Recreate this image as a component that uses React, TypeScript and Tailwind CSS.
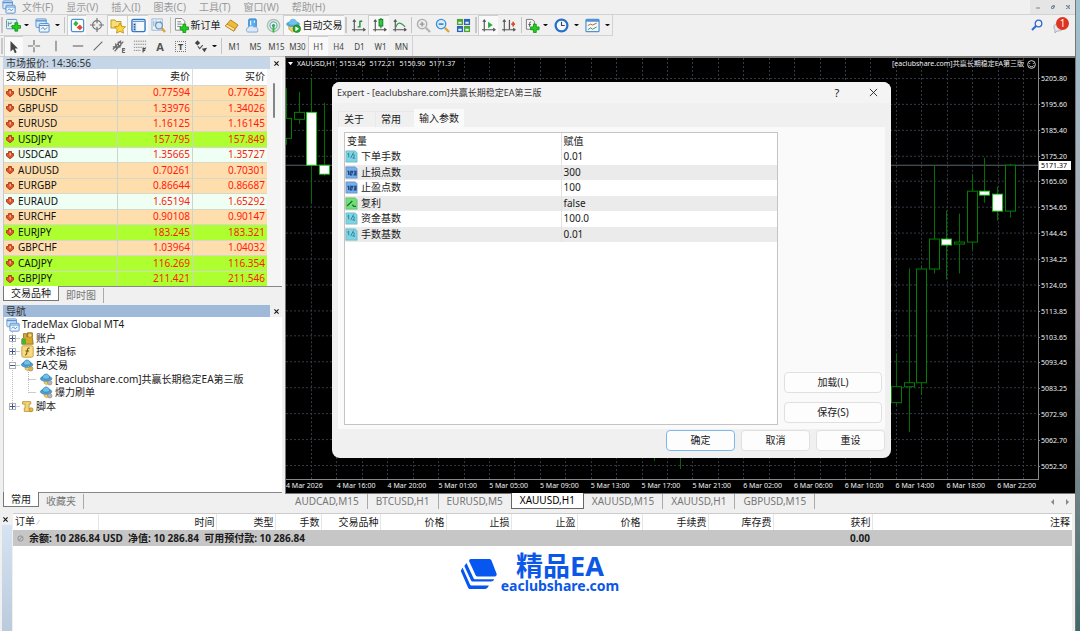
import { useState } from "react";
import type { ReactNode } from "react";
import clsx from "clsx";

const menus = ["文件(F)", "显示(V)", "插入(I)", "图表(C)", "工具(T)", "窗口(W)", "帮助(H)"];
const timeframes = ["M1", "M5", "M15", "M30", "H1", "H4", "D1", "W1", "MN"];

const quotes = [
  { symbol: "USDCHF", bid: "0.77594", ask: "0.77625", color: "bg-[#ffdead]" },
  { symbol: "GBPUSD", bid: "1.33976", ask: "1.34026", color: "bg-[#ffdead]" },
  { symbol: "EURUSD", bid: "1.16125", ask: "1.16145", color: "bg-[#ffdead]" },
  { symbol: "USDJPY", bid: "157.795", ask: "157.849", color: "bg-[#adff2f]" },
  { symbol: "USDCAD", bid: "1.35665", ask: "1.35727", color: "bg-[#f0fff4]" },
  { symbol: "AUDUSD", bid: "0.70261", ask: "0.70301", color: "bg-[#ffdead]" },
  { symbol: "EURGBP", bid: "0.86644", ask: "0.86687", color: "bg-[#ffdead]" },
  { symbol: "EURAUD", bid: "1.65194", ask: "1.65292", color: "bg-[#f0fff4]" },
  { symbol: "EURCHF", bid: "0.90108", ask: "0.90147", color: "bg-[#ffdead]" },
  { symbol: "EURJPY", bid: "183.245", ask: "183.321", color: "bg-[#adff2f]" },
  { symbol: "GBPCHF", bid: "1.03964", ask: "1.04032", color: "bg-[#ffdead]" },
  { symbol: "CADJPY", bid: "116.269", ask: "116.354", color: "bg-[#adff2f]" },
  { symbol: "GBPJPY", bid: "211.421", ask: "211.546", color: "bg-[#adff2f]" },
];

const ohlc = ["XAUUSD,H1", "5153.45", "5172.21", "5150.90", "5171.37"];

const prices = [
  "5205.80", "5195.60", "5185.40", "5175.20", "5165.00", "5154.65", "5144.45", "5134.25",
  "5124.05", "5113.85", "5103.65", "5093.45", "5083.25", "5072.90", "5062.70", "5052.50",
];

const times = [
  "4 Mar 2026", "4 Mar 16:00", "4 Mar 20:00", "5 Mar 01:00", "5 Mar 05:00",
  "5 Mar 09:00", "5 Mar 13:00", "5 Mar 17:00", "5 Mar 21:00", "6 Mar 02:00",
  "6 Mar 06:00", "6 Mar 10:00", "6 Mar 14:00", "6 Mar 18:00", "6 Mar 22:00",
];

// x, wick top, wick bottom, body top, body bottom, bearish
const candles: [number, number, number, number, number, boolean][] = [
  [1, 30, 87, 61, 81, false],
  [14, 34, 66, 55, 62, false],
  [26, 20, 146, 55, 108, true],
  [39, 45, 118, 108, 117, true],
  [369, 390, 404, 390, 401, false],
  [395, 380, 412, 380, 390, false],
  [611, 296, 348, 330, 346, false],
  [624, 211, 375, 326, 330, false],
  [636, 208, 337, 212, 326, false],
  [649, 108, 216, 182, 212, false],
  [661, 153, 222, 182, 188, true],
  [674, 156, 216, 185, 187, false],
  [687, 117, 192, 134, 185, false],
  [699, 100, 145, 134, 138, true],
  [712, 129, 163, 137, 154, true],
  [725, 106, 160, 108, 154, false],
];

const chartTabs = [
  "AUDCAD,M15", "BTCUSD,H1", "EURUSD,M5", "XAUUSD,H1", "XAUUSD,M15", "XAUUSD,H1", "GBPUSD,M15",
];

const inputs: { name: string; value: string; type: "double" | "int" | "bool" }[] = [
  { name: "下单手数", value: "0.01", type: "double" },
  { name: "止损点数", value: "300", type: "int" },
  { name: "止盈点数", value: "100", type: "int" },
  { name: "复利", value: "false", type: "bool" },
  { name: "资金基数", value: "100.0", type: "double" },
  { name: "手数基数", value: "0.01", type: "double" },
];

function Svg({ children, className = "size-[15px]" }: { children: ReactNode; className?: string }) {
  return (
    <svg viewBox="0 0 16 16" className={clsx("shrink-0", className)} fill="none" aria-hidden="true">
      {children}
    </svg>
  );
}

const Plus = ({ x = 0, y = 0 }) => (
  <path
    d={`M${x + 3} ${y}h3v3h3v3h-3v3h-3v-3h-3v-3h3z`}
    fill="#1fd01f"
    stroke="#0a8a0a"
    strokeWidth=".8"
  />
);

const Axes = () => (
  <path d="M3.500 2v12.500M1 12.500h14M2 4l1.500-2 1.500 2M13 11l2 1.500-2 1.500" stroke="#555" strokeWidth="1.200" />
);

const NewChartIcon = () => (
  <Svg>
    <rect x=".5" y="1.500" width="11" height="10" rx="1" fill="#e8f2fa" stroke="#5d93bd" />
    <path d="M2.500 4v5M2.500 6h3v-2M5 9h3" stroke="#5a9a6a" />
    <Plus x={6.5} y={5} />
  </Svg>
);

const ProfilesIcon = ({ className }: { className?: string }) => (
  <Svg className={className}>
    <rect x="1" y="1" width="11" height="9" rx="1" fill="#d8eafa" stroke="#5b93cf" />
    <path d="M1 3h11" stroke="#5b93cf" strokeWidth="1.500" />
    <rect x="4.500" y="6" width="10.500" height="9" rx="1" fill="#eef6fd" stroke="#4a86c8" />
    <path d="M4.500 8h10.500M6.500 12l2-2 2 2.500 2.500-2.500" stroke="#4a86c8" />
  </Svg>
);

const MarketWatchIcon = () => (
  <Svg>
    <rect x="1.500" y="1.500" width="13" height="13" rx="1.500" fill="#fff" stroke="#4a92d6" strokeWidth="1.300" />
    <path d="M6 3 9 5.500 6.500 9 3.500 6.500z" fill="#2fb54a" />
    <path d="m10.500 7 3 3-3 3-3.500-3z" fill="#e5472c" />
  </Svg>
);

const CrosshairIcon = () => (
  <Svg className="size-3.5">
    <circle cx="8" cy="8" r="5" stroke="#777" strokeWidth="1.400" />
    <path d="M8 0v6M8 10v6M0 8h6M10 8h6" stroke="#777" strokeWidth="1.400" />
  </Svg>
);

const FavoritesIcon = () => (
  <Svg className="size-4">
    <path d="M1 2h4l1 1.500h5V10H1z" fill="#f7dd7a" stroke="#c79a22" />
    <path d="m10 5 1.700 3.300 3.800.5-2.700 2.600.7 3.700L10 13.400l-3.500 1.700.7-3.700-2.700-2.600 3.800-.5z" fill="#fbd53c" stroke="#b98a12" strokeWidth=".8" />
  </Svg>
);

const DataWindowIcon = () => (
  <Svg>
    <rect x="1" y="1.500" width="14" height="13" rx="1.500" fill="#f4f9ff" stroke="#3277c4" strokeWidth="1.500" />
    <path d="M2 3.500h12" stroke="#3277c4" />
    <path d="M4 5v9" stroke="#9cc4ee" strokeWidth="3" />
    <path d="M3 7h1.500M3 9.500h1.500M3 12h1.500" stroke="#2a2a2a" />
  </Svg>
);

const TesterIcon = () => (
  <Svg>
    <rect x="1" y="1" width="11" height="12" fill="#eef5fb" stroke="#9ab6d0" />
    <path d="M3 3v6M5.500 2.500v5M10 3v3" stroke="#7aa4cc" />
    <circle cx="8.500" cy="8" r="3.600" fill="#cfe6f8" fillOpacity=".8" stroke="#6e93b5" strokeWidth="1.200" />
    <path d="m11.500 11 3.500 4" stroke="#d9a23a" strokeWidth="2.400" />
  </Svg>
);

const NewOrderIcon = () => (
  <Svg>
    <path d="M1.500.5h7l3 3V13h-10z" fill="#fafafa" stroke="#8a8a8a" />
    <path d="M3.500 4h4M3.500 6.500h5M3.500 9h4" stroke="#777" />
    <Plus x={6.5} y={6.5} />
  </Svg>
);

const MetaEditorIcon = () => (
  <Svg>
    <path d="M1.500 8.500 7 2l8 5.500-4.500 6.500z" fill="#eebc3c" stroke="#b97e14" />
    <path d="m1.500 8.500 9 5.500 1-3L3 6.500z" fill="#fbe29a" stroke="#b97e14" strokeWidth=".8" />
  </Svg>
);

const HostingIcon = () => (
  <Svg>
    <rect x="4" y="1" width="8" height="9" rx="1" fill="#58aef0" stroke="#2f78c0" />
    <path d="M6 3v5M10 3v2" stroke="#eaf6ff" strokeWidth="1.300" />
    <path d="M3 15a2.500 2.500 0 0 1 .5-4.800 3.500 3.500 0 0 1 6-.5 2.800 2.800 0 0 1 4 2.600A2 2 0 0 1 13 15z" fill="#dce9f8" stroke="#86a6cc" />
  </Svg>
);

const SignalsIcon = () => (
  <Svg>
    <circle cx="8" cy="8" r="6.500" stroke="#a9c4b0" strokeWidth="1.600" />
    <circle cx="8" cy="8" r="3.800" stroke="#7bafc4" strokeWidth="1.400" />
    <circle cx="8" cy="8" r="1.700" fill="#2ea84e" />
    <path d="M8 9v6.500" stroke="#3bb54a" strokeWidth="2" />
  </Svg>
);

const ExpertIcon = ({ className, dot = "#e3b43c" }: { className?: string; dot?: string }) => (
  <Svg className={className}>
    <path d="M5 9h6v3.500l-3 2-3-2z" fill="#f3cf63" stroke="#b98f2a" strokeWidth=".7" />
    <ellipse cx="7.500" cy="7" rx="7" ry="3.200" fill="#4fa6d8" stroke="#2d76a8" strokeWidth=".8" />
    <path d="M3 6.500c0-7 9-7 9 0-2 1.500-7 1.500-9 0z" fill="#71c0ea" stroke="#2d76a8" strokeWidth=".8" />
    <circle cx="12" cy="12" r="2.800" fill={dot} stroke="#777" strokeWidth=".6" />
  </Svg>
);

const AutoTradingIcon = () => (
  <Svg>
    <path d="M3 8h8v5l-4 2-4-3z" fill="#f3cf63" stroke="#b98f2a" strokeWidth=".7" />
    <ellipse cx="7.500" cy="6.500" rx="7.300" ry="3.200" fill="#4fa6d8" />
    <path d="M3 6c0-7 9-7 9 0-2 1.500-7 1.500-9 0z" fill="#71c0ea" />
    <circle cx="11.500" cy="11.500" r="4" fill="#22a82e" stroke="#137a1c" strokeWidth=".7" />
    <path d="m10 9 4 2.500-4 2.500z" fill="#fff" />
  </Svg>
);

const BarChartIcon = () => (
  <Svg>
    <Axes />
    <path d="M9.500 3v7M7 9.500h2.500M9.500 3.500H12" stroke="#1d8f35" strokeWidth="1.500" />
  </Svg>
);

const CandleChartIcon = () => (
  <Svg>
    <Axes />
    <path d="M9.500 0v11" stroke="#0d7d22" strokeWidth="1.200" />
    <rect x="7.500" y="1.500" width="4" height="7" fill="#2ecc45" stroke="#0d7d22" />
  </Svg>
);

const LineChartIcon = () => (
  <Svg>
    <Axes />
    <path d="M4 10c2-6 5-6 10-.5" stroke="#3b9a4f" strokeWidth="1.300" />
  </Svg>
);

const ZoomIcon = ({ out }: { out?: boolean }) => (
  <Svg>
    <circle cx="6.500" cy="6.500" r="5" fill={out ? "#d6ebfb" : "#ececec"} stroke={out ? "#3e8fd6" : "#aaa"} strokeWidth="1.400" />
    <path d={out ? "M4 6.500h5" : "M4 6.500h5M6.500 4v5"} stroke={out ? "#2270bd" : "#999"} strokeWidth="1.500" />
    <path d="m10.500 10.500 4.500 4.500" stroke={out ? "#dba535" : "#b5b5b5"} strokeWidth="2.400" />
  </Svg>
);

const TileIcon = () => (
  <Svg>
    <rect x="1" y="1" width="6.500" height="6.500" fill="#4aa52e" />
    <rect x="8.500" y="1" width="6.500" height="6.500" fill="#2c62b8" />
    <rect x="1" y="8.500" width="6.500" height="6.500" fill="#2c62b8" />
    <rect x="8.500" y="8.500" width="6.500" height="6.500" fill="#4aa52e" />
    <path d="M2.500 5H6M10 5h3.500M2.500 12.500H6M10 12.500h3.500" stroke="#e6f4fa" strokeWidth="2" />
  </Svg>
);

const AutoScrollIcon = () => (
  <Svg>
    <Axes />
    <path d="m7.500 4 5 3.500-5 3.500z" fill="#27b03c" />
  </Svg>
);

const ShiftIcon = () => (
  <Svg>
    <Axes />
    <path d="M9 2v10" stroke="#555" strokeWidth="1.300" />
    <path d="M15 6.500h-4M13 4v5" stroke="#d4502c" strokeWidth="1.800" />
  </Svg>
);

const IndicatorsIcon = () => (
  <Svg>
    <path d="M1.500 1.500h6l2.500 2V12H1.500z" fill="#f6f6f6" stroke="#777" />
    <path d="M6.500 4.500c-2-1-1.500 1-1.500 5M3.500 7h3" stroke="#555" />
    <Plus x={6} y={6.5} />
  </Svg>
);

const ClockIcon = () => (
  <Svg>
    <circle cx="8" cy="8" r="6.300" fill="#f2f8ff" stroke="#2a6fc4" strokeWidth="2.400" />
    <path d="M8 4v4h3.500" stroke="#444" strokeWidth="1.200" />
  </Svg>
);

const TemplateIcon = () => (
  <Svg>
    <rect x="1" y="1.500" width="14" height="13" rx="1" fill="#f3f8fc" stroke="#5292cf" strokeWidth="1.300" />
    <path d="M1 3h14" stroke="#5292cf" strokeWidth="2" />
    <path d="m3 8 3-1.500 2 1 4.500-2" stroke="#c2593a" />
    <path d="m3 12.500 3-2 2 1.500 4.500-2.500" stroke="#3d9148" />
  </Svg>
);

const CursorIcon = () => (
  <Svg className="size-3.5">
    <path d="M4 1v12l3-2.500 2 4.500 2-1-2-4.200h3.500z" fill="#444" />
  </Svg>
);

const StrokeIcon = ({ d }: { d: string }) => (
  <Svg className="size-3.5">
    <path d={d} stroke="#6a6a6a" strokeWidth="1.300" />
  </Svg>
);

const FiboIcon = () => (
  <Svg className="size-3.5">
    <path d="M1 2.500h14M1 6h14M1 9.500h14M1 13h8" stroke="#777" strokeDasharray="1.500 1" />
    <path d="M11.500 15.500V11h3M11.500 13H14" stroke="#444" strokeWidth="1.200" />
  </Svg>
);

const ArrowsIcon = () => (
  <Svg className="size-3.5">
    <path d="m1 4.500 3-3 3 3-3 3z" fill="#444" />
    <path d="m4.500 8.500 2 2.500 3.500-4" stroke="#555" strokeWidth="1.400" />
    <path d="m9 11 6-1-3 5z" fill="#444" />
  </Svg>
);

const TypeIcon = ({ type }: { type: "double" | "int" | "bool" }) => {
  const fill = { double: "#7fd3e2", int: "#78aeea", bool: "#72dd7a" }[type];
  const ink = { double: "#1e7486", int: "#173f78", bool: "#187426" }[type];
  return (
    <Svg className="size-[13px]">
      <path d="M1 1h11.500L15 3.500V15H1z" fill={fill} stroke={ink} strokeOpacity=".35" />
      {type === "double" && <path d="m3 5 1.500-1v5M10.500 3 7 10M9.500 6c2.500-1 3 1 0 4h3" stroke={ink} />}
      {type === "int" && <path d="M3 6.500h1.500V11M6 6.500h3v2H6.500V11H9M10.500 6.500h3V11h-3M11 8.700h2.500" stroke={ink} strokeWidth="1.400" />}
      {type === "bool" && <path d="M2.500 11 9 5M9 9.500l2 2h2.500" stroke={ink} strokeWidth="1.600" />}
    </Svg>
  );
};

function Grip() {
  return <span className="mx-px h-4 w-0.5 shrink-0 border-x border-[#c8c8c8]" />;
}

function Divider() {
  return <span className="mx-0.5 h-4 w-px shrink-0 bg-[#c4c4c4]" />;
}

function ToolButton({
  label,
  width,
  active,
  children,
}: {
  label: string;
  width: string;
  active?: boolean;
  children: ReactNode;
}) {
  return (
    <button
      aria-label={label}
      className={clsx(
        "flex h-5 shrink-0 items-center justify-center gap-0.5 whitespace-nowrap",
        width,
        active && "border-l border-t border-[#cfcfcf] bg-[#f9f9f9]",
      )}
    >
      {children}
    </button>
  );
}

function DropArrow({ label }: { label: string }) {
  return (
    <button aria-label={label} className="flex h-5 w-[9px] shrink-0 items-center justify-center">
      <svg viewBox="0 0 6 3" className="w-[5px]" aria-hidden="true">
        <path d="M0 0h6L3 3z" fill="#111" />
      </svg>
    </button>
  );
}

function Toolbar() {
  const [frame, setFrame] = useState("H1");

  return (
    <div className="relative shrink-0 border-t border-[#d2d2d2]">
      <div className="flex h-[21px] w-fit items-center border-b border-r border-[#d2d2d2]">
        <Grip />
        <ToolButton label="新图表" width="w-[18px]"><NewChartIcon /></ToolButton>
        <DropArrow label="新图表选项" />
        <ToolButton label="配置文件" width="w-[22px]"><ProfilesIcon /></ToolButton>
        <DropArrow label="配置文件选项" />
        <Divider />
        <ToolButton label="市场报价" width="w-[19px]" active><MarketWatchIcon /></ToolButton>
        <ToolButton label="数据窗口" width="w-[21px]"><CrosshairIcon /></ToolButton>
        <ToolButton label="导航" width="w-5" active><FavoritesIcon /></ToolButton>
        <ToolButton label="终端" width="w-[21px]" active><DataWindowIcon /></ToolButton>
        <ToolButton label="策略测试" width="w-5"><TesterIcon /></ToolButton>
        <Divider />
        <ToolButton label="新订单" width="w-12"><NewOrderIcon /><span>新订单</span></ToolButton>
        <ToolButton label="编辑器" width="w-[21px]"><MetaEditorIcon /></ToolButton>
        <ToolButton label="虚拟主机" width="w-[21px]"><HostingIcon /></ToolButton>
        <ToolButton label="信号" width="w-5"><SignalsIcon /></ToolButton>
        <ToolButton label="自动交易" width="w-[61px]" active><AutoTradingIcon /><span>自动交易</span></ToolButton>
        <Grip />
        <ToolButton label="柱状图" width="w-5"><BarChartIcon /></ToolButton>
        <ToolButton label="阴阳烛" width="w-[21px]" active><CandleChartIcon /></ToolButton>
        <ToolButton label="折线图" width="w-5"><LineChartIcon /></ToolButton>
        <Divider />
        <ToolButton label="放大" width="w-[18px]"><ZoomIcon /></ToolButton>
        <ToolButton label="缩小" width="w-[21px]"><ZoomIcon out /></ToolButton>
        <ToolButton label="平铺窗口" width="w-[21px]"><TileIcon /></ToolButton>
        <Grip />
        <ToolButton label="自动滚动" width="w-5" active><AutoScrollIcon /></ToolButton>
        <ToolButton label="图表平移" width="w-[21px]"><ShiftIcon /></ToolButton>
        <Divider />
        <ToolButton label="指标" width="w-[17px]"><IndicatorsIcon /></ToolButton>
        <DropArrow label="指标列表" />
        <ToolButton label="周期" width="w-[22px]"><ClockIcon /></ToolButton>
        <DropArrow label="周期列表" />
        <ToolButton label="模板" width="w-[22px]"><TemplateIcon /></ToolButton>
        <DropArrow label="模板列表" />
      </div>
      <div className="flex h-5 w-fit items-center border-r border-[#d2d2d2]">
        <Grip />
        <ToolButton label="光标" width="w-[19px]" active><CursorIcon /></ToolButton>
        <ToolButton label="十字线" width="w-[21px]"><StrokeIcon d="M8 1v6M8 9.500V15M1 8h6M9.500 8H15" /></ToolButton>
        <ToolButton label="垂直线" width="w-[23px]"><StrokeIcon d="M8 2v12" /></ToolButton>
        <ToolButton label="水平线" width="w-[21px]"><StrokeIcon d="M2 8h12" /></ToolButton>
        <ToolButton label="趋势线" width="w-5"><StrokeIcon d="M3 13 13 3" /></ToolButton>
        <ToolButton label="通道" width="w-[21px]"><StrokeIcon d="M1 12 10 2M3 14 13 3M4 5l1 6M7 3l1 7M10 2v6M1 9h9M15 11h-3v4.500h3M12 13h2.500" /></ToolButton>
        <ToolButton label="斐波纳契" width="w-[21px]"><FiboIcon /></ToolButton>
        <ToolButton label="文字" width="w-5"><span className="text-[11px] font-bold text-[#555]">A</span></ToolButton>
        <ToolButton label="文本标签" width="w-[21px]">
          <span className="flex size-[11px] items-center justify-center border border-dotted border-[#777] text-[9px] font-bold text-[#444]">T</span>
        </ToolButton>
        <ToolButton label="箭头" width="w-[19px]"><ArrowsIcon /></ToolButton>
        <DropArrow label="箭头列表" />
        <Divider />
        {timeframes.map((t) => (
          <button
            key={t}
            onClick={() => setFrame(t)}
            className={clsx(
              "h-5 shrink-0 text-[8px] text-[#444]",
              t === frame ? "w-5 border-l border-t border-[#cfcfcf] bg-[#f9f9f9]" : "w-[21px]",
            )}
          >
            {t}
          </button>
        ))}
      </div>
      <div className="absolute right-1 top-0 flex h-5 items-center gap-2">
        <button aria-label="搜索">
          <svg viewBox="0 0 12 12" className="size-3" fill="none">
            <circle cx="7.500" cy="4.500" r="3.300" stroke="#2f66d0" strokeWidth="1.300" />
            <path d="m5 7-4 4" stroke="#2f66d0" strokeWidth="2" />
          </svg>
        </button>
        <button aria-label="通知" className="relative h-4 w-5">
          <svg viewBox="0 0 20 16" className="absolute inset-0" fill="none">
            <path d="M3 9c0-3 9-3 9 1s-4 4-6 4l-2 2v-3c-1-1-1-2-1-4z" fill="#e3e6ea" stroke="#a9adb3" />
          </svg>
          <span className="absolute right-0.5 top-0 flex size-[13px] items-center justify-center rounded-full bg-[#dd3420] text-[10px] text-white">
            1
          </span>
        </button>
      </div>
    </div>
  );
}

function PanelTitle({ children, className }: { children: ReactNode; className: string }) {
  return (
    <div className="flex h-3 shrink-0 items-center">
      <h2 className={clsx("flex h-3 flex-1 items-center pl-[3px]", className)}>{children}</h2>
      <button aria-label="关闭" className="flex w-3 items-center justify-center">
        <svg viewBox="0 0 6 6" className="size-[5px]"><path d="M.5.5l5 5M5.500.5l-5 5" stroke="#111" strokeWidth="1.300" /></svg>
      </button>
    </div>
  );
}

function PanelTabs({ tabs }: { tabs: string[] }) {
  return (
    <div className="flex h-[15px] shrink-0 border-t border-[#888]">
      {tabs.map((t, i) => (
        <button
          key={t}
          className={clsx(
            "h-[15px] px-[7px]",
            i === 0 ? "-mt-px border-x border-b border-[#777] bg-white" : "my-px h-3 border-r border-[#aaa] text-[#777]",
          )}
        >
          {t}
        </button>
      ))}
    </div>
  );
}

function MarketWatch() {
  return (
    <section className="flex shrink-0 flex-col">
      <PanelTitle className="bg-[#c5d6e8] text-[#333]">市场报价: 14:36:56</PanelTitle>
      <div className="flex border-l border-[#c8c8c8] bg-white">
        <table className="h-[217px] flex-1 table-fixed border-collapse">
          <thead>
            <tr className="h-4 text-right">
              <th className="w-[113px] border-r border-[#dcdcdc] pl-0.5 text-left font-normal">交易品种</th>
              <th className="border-r border-[#dcdcdc] pr-0.5 font-normal">卖价</th>
              <th className="pr-0.5 font-normal">买价</th>
            </tr>
          </thead>
          <tbody>
            {quotes.map((q) => (
              <tr key={q.symbol} className={clsx("border-t border-[#d8d8c8] text-right text-[#ff1a10]", q.color)}>
                <td className="border-r border-[#d0d4c8] text-left text-[#111]">
                  <span className="flex items-center gap-1 pl-0.5">
                    <svg viewBox="0 0 8 8" className="size-2" aria-hidden="true">
                      <path d="M2.500.5h3v2h2v2.500L4 7.800.5 5V2.500h2z" fill="#e2552b" stroke="#9c2f12" strokeWidth=".8" />
                      <path d="M3.500 2v2.500h1.500V2z" fill="#f8b48c" />
                    </svg>
                    {q.symbol}
                  </span>
                </td>
                <td className="border-r border-[#d0d4c8] pr-0.5">{q.bid}</td>
                <td className="pr-0.5">{q.ask}</td>
              </tr>
            ))}
          </tbody>
        </table>
        <div className="mr-px w-3.5 bg-[#f5f5f5] pl-1.5 pt-3.5">
          <div className="h-[35px] w-0.5 rounded bg-[#858585]" />
        </div>
      </div>
      <PanelTabs tabs={["交易品种", "即时图"]} />
    </section>
  );
}

function TreeRow({
  toggle,
  depth = 0,
  icon,
  children,
}: {
  toggle?: "+" | "-";
  depth?: number;
  icon: ReactNode;
  children: ReactNode;
}) {
  return (
    <li className={clsx("flex items-center whitespace-nowrap", depth === 0 && "pl-0.5", depth === 1 && "pl-[5px]", depth === 2 && "pl-6")}>
      {toggle && (
        <button aria-label={toggle === "+" ? "展开" : "折叠"} className="relative mr-1 flex size-[7px] shrink-0 items-center justify-center border border-[#b0b0b0] bg-white">
          <svg viewBox="0 0 5 5" className="size-[5px]">
            <path d={toggle === "+" ? "M0 2.500h5M2.500 0v5" : "M0 2.500h5"} stroke="#3556a0" />
          </svg>
        </button>
      )}
      {depth > 0 && <span className={clsx("h-px shrink-0 bg-[#ccc]", depth === 1 ? "-ml-1 mr-px w-1" : "mr-1 w-2")} />}
      {icon}
      <span className="ml-0.5">{children}</span>
    </li>
  );
}

function Navigator() {
  return (
    <section className="flex min-h-0 flex-1 flex-col">
      <PanelTitle className="bg-[#9fb9d8] text-[#333]">导航</PanelTitle>
      <div className="min-h-0 flex-1 overflow-hidden border-l border-[#c8c8c8] bg-white pt-px">
        <ul className="relative grid h-[95px] auto-rows-fr before:absolute before:bottom-1.5 before:left-2 before:top-3.5 before:border-l before:border-dotted before:border-[#bbb] after:absolute after:bottom-5 after:left-6 after:top-12 after:border-l after:border-dotted after:border-[#bbb]">
          <TreeRow icon={<ProfilesIcon className="size-3.5" />}>TradeMax Global MT4</TreeRow>
          <TreeRow
            toggle="+"
            depth={1}
            icon={
              <Svg className="size-[13px]">
                <path d="M3 2h4v4h1V1h6v6l1 8H1V9l2-2z" fill="#dba72a" stroke="#8f6a12" />
                <circle cx="11" cy="4" r="2.500" fill="#f5d676" stroke="#8f6a12" strokeWidth=".6" />
                <path d="M1 8h5v7H1z" fill="#43b33a" />
              </Svg>
            }
          >
            账户
          </TreeRow>
          <TreeRow
            toggle="+"
            depth={1}
            icon={
              <Svg className="size-[13px]">
                <rect x="1" y="1" width="14" height="14" rx="2" fill="#f6dc80" stroke="#b9902e" />
                <path d="M10.500 4c-2-1-2.500.5-3 4s-1 4.500-2.500 4M5.500 7.500H10" stroke="#6d5210" strokeWidth="1.300" />
              </Svg>
            }
          >
            技术指标
          </TreeRow>
          <TreeRow toggle="-" depth={1} icon={<ExpertIcon className="size-[13px]" />}>EA交易</TreeRow>
          <TreeRow depth={2} icon={<ExpertIcon className="size-[13px]" dot="#b5b5b5" />}>
            [eaclubshare.com]共赢长期稳定EA第三版
          </TreeRow>
          <TreeRow depth={2} icon={<ExpertIcon className="size-[13px]" dot="#b5b5b5" />}>爆力刷单</TreeRow>
          <TreeRow
            toggle="+"
            depth={1}
            icon={
              <Svg className="size-[13px]">
                <path d="M2 2h10v3h-2v6h3v3H4v-4H5V5H2z" fill="#f4d573" stroke="#b58d2b" />
                <circle cx="12.500" cy="12" r="2.500" fill="#e6b93f" stroke="#8f6a12" strokeWidth=".6" />
              </Svg>
            }
          >
            脚本
          </TreeRow>
        </ul>
      </div>
      <PanelTabs tabs={["常用", "收藏夹"]} />
    </section>
  );
}

function Candles() {
  // plot coordinates: 752 x 422
  const columns = Array.from({ length: 29 }, (_, i) => Math.round(26 + i * 25.43));
  const rows = Array.from({ length: 16 }, (_, i) => Math.round(21 + i * 25.84));

  return (
    <svg viewBox="0 0 752 422" preserveAspectRatio="none" className="absolute inset-0 size-full" shapeRendering="crispEdges">
      <g stroke="#343c46" strokeDasharray="2 2">
        {columns.map((x) => <path key={x} d={`M${x - 0.5} 0V422`} />)}
        {rows.map((y) => <path key={y} d={`M0 ${y - 0.5}H752`} />)}
      </g>
      <path d="M0 107.500H752" stroke="#59636e" />
      {candles.map(([x, high, low, top, bottom, bearish]) => (
        <g key={x} stroke={bearish ? "#20c020" : "#008000"}>
          <path d={`M${x - 0.5} ${high}V${low}`} stroke="#007000" />
          <rect x={x - 5.5} y={top - 0.5} width="10" height={bottom - top} fill={bearish ? "#fff" : "#000"} />
        </g>
      ))}
    </svg>
  );
}

function Chart() {
  return (
    <div className="flex min-h-0 flex-1 flex-col border-l border-t-2 border-[#777] bg-black text-[7px] text-[#f0f0f0]">
      <div className="flex min-h-0 flex-1">
        <div className="relative flex-1 overflow-hidden border-b border-r border-[#888]">
          <Candles />
          <div className="relative flex items-center justify-between pl-0.5 pr-0.5 leading-3">
            <span className="flex items-center gap-1">
              <svg viewBox="0 0 6 4" className="w-[5px]"><path d="M0 0h6L3 4z" fill="#fff" /></svg>
              {ohlc.map((v) => <span key={v}>{v}</span>)}
            </span>
            <span className="flex items-center gap-[3px]">
              <span>[eaclubshare.com]共赢长期稳定EA第三版</span>
              <svg viewBox="0 0 10 10" className="size-[9px]" fill="none" stroke="#ddd">
                <circle cx="5" cy="5" r="4.300" />
                <path d="M3 3.500v1M7 3.500v1M2.500 6c1 2 4 2 5 0" />
              </svg>
            </span>
          </div>
        </div>
        <div className="relative flex w-9 flex-col justify-between pb-2 pl-0.5 pt-4">
          {prices.map((p) => (
            <span key={p} className="relative h-2.5 leading-[10px] before:absolute before:-left-0.5 before:top-1 before:h-px before:w-px before:bg-[#888]">
              {p}
            </span>
          ))}
          <span className="absolute left-0 top-[103px] h-[9px] w-8 bg-white pl-0.5 leading-[9px] text-black">5171.37</span>
        </div>
      </div>
      <div className="grid h-[13px] grid-cols-[repeat(15,minmax(0,1fr))] whitespace-nowrap pr-[27px] leading-3">
        {times.map((t) => <span key={t}>{t}</span>)}
      </div>
    </div>
  );
}

function ExpertDialog() {
  const button = "h-[21px] rounded-sm border border-[#e0e0e0] bg-[#fdfdfd]";

  return (
    <div
      role="dialog"
      aria-labelledby="expert-title"
      className="absolute left-[47px] top-[26px] flex h-[376px] w-[559px] flex-col overflow-hidden rounded-lg bg-[#f0f0f0] px-1.5 shadow-lg"
    >
      <header className="-mx-1.5 flex h-[21px] shrink-0 items-center bg-[#f4f4f4] pl-[5px] pr-3">
        <h1 id="expert-title" className="flex-1 text-[9px] text-[#333]">Expert - [eaclubshare.com]共赢长期稳定EA第三版</h1>
        <button aria-label="帮助" className="mr-6 w-3 text-[11px]">?</button>
        <button aria-label="关闭" className="flex w-3 justify-center">
          <svg viewBox="0 0 10 10" className="size-[9px]"><path d="M1 1l8 8M9 1l-8 8" stroke="#222" /></svg>
        </button>
      </header>
      <div role="tablist" className="mt-1.5 flex h-[18px] shrink-0 items-end">
        <button role="tab" className="h-4 w-[38px] border border-b-0 border-[#e8e8e8] pl-[5px] text-left">关于</button>
        <button role="tab" className="h-4 w-[38px] border-t border-[#e8e8e8] pl-[5px] text-left">常用</button>
        <button role="tab" aria-selected="true" className="h-[18px] w-[50px] bg-[#fafafa]">输入参数</button>
      </div>
      <div className="flex min-h-0 flex-1 gap-1.5 bg-[#fafafa] pb-1 pl-1.5 pr-[3px] pt-[5px]">
        <div className="flex-1 border border-[#c4c4c4] bg-white">
          <table className="h-[109px] w-full table-fixed border-collapse">
            <thead>
              <tr className="h-4 text-left">
                <th className="w-1/2 border-r border-[#e2e2e2] pl-0.5 font-normal">变量</th>
                <th className="pl-0.5 font-normal">赋值</th>
              </tr>
            </thead>
            <tbody>
              {inputs.map((p) => (
                <tr key={p.name} className="even:bg-[#ebebeb]">
                  <td className="border-r border-[#e2e2e2]">
                    <span className="flex items-center gap-[3px]">
                      <TypeIcon type={p.type} />
                      {p.name}
                    </span>
                  </td>
                  <td className="pl-0.5">{p.value}</td>
                </tr>
              ))}
            </tbody>
          </table>
        </div>
        <div className="flex w-[98px] flex-col justify-end gap-[9px] pb-0.5">
          <button className={button}>加载(L)</button>
          <button className={button}>保存(S)</button>
        </div>
      </div>
      <footer className="flex shrink-0 justify-end gap-1.5 pb-[7px] pt-px">
        <button className="h-[21px] w-[69px] rounded-sm border border-[#7db8ea] bg-[#fdfdfd]">确定</button>
        <button className={clsx(button, "w-[69px]")}>取消</button>
        <button className={clsx(button, "w-[69px]")}>重设</button>
      </footer>
    </div>
  );
}

function ChartTabs() {
  return (
    <nav className="flex h-5 shrink-0 items-start border-t border-[#777] pl-0.5 text-[#777]">
      {chartTabs.map((t, i) => (
        <button
          key={`${t}-${i}`}
          className={clsx(
            "px-2",
            i === 3 ? "-mt-px h-4 border border-t-0 border-[#666] bg-white text-black" : "h-[15px] border-r border-[#aaa]",
            i === 2 && "border-r-0",
          )}
        >
          {t}
        </button>
      ))}
      <span className="ml-auto mr-1.5 flex h-[15px] items-center gap-3">
        <button aria-label="向左"><svg viewBox="0 0 3 6" className="w-[3px]"><path d="M3 0v6L0 3z" fill="#888" /></svg></button>
        <button aria-label="向右"><svg viewBox="0 0 3 6" className="w-[3px]"><path d="M0 0v6l3-3z" fill="#888" /></svg></button>
      </span>
    </nav>
  );
}

function Terminal() {
  const cell = "border-r border-[#e6e6e6] pr-px font-normal";

  return (
    <section className="flex h-[118px] shrink-0">
      <div className="flex w-[13px] shrink-0 flex-col pl-0.5">
        <button aria-label="关闭" className="flex h-3 items-center pl-px">
          <svg viewBox="0 0 6 6" className="size-[5px]"><path d="M.5.5l5 5M5.500.5l-5 5" stroke="#111" strokeWidth="1.300" /></svg>
        </button>
        <div className="w-2.5 flex-1 bg-linear-to-b from-[#d5e3f2] to-[#bccbdc]" />
      </div>
      <div className="mr-[3px] flex-1 border-t border-[#ccc] bg-white">
        <table className="w-full table-fixed border-collapse">
          <thead>
            <tr className="h-4 text-right">
              <th className="w-[85px] border-r border-[#e6e6e6] pl-0.5 text-left font-normal">订单 <span className="text-[7px] text-[#aaa]">⁄</span></th>
              <th className={clsx(cell, "w-[118px]")}>时间</th>
              <th className={clsx(cell, "w-[59px]")}>类型</th>
              <th className={clsx(cell, "w-[46px]")}>手数</th>
              <th className={clsx(cell, "w-[59px]")}>交易品种</th>
              <th className={clsx(cell, "w-[66px]")}>价格</th>
              <th className={clsx(cell, "w-[65px]")}>止损</th>
              <th className={clsx(cell, "w-[66px]")}>止盈</th>
              <th className={clsx(cell, "w-[65px]")}>价格</th>
              <th className={clsx(cell, "w-[66px]")}>手续费</th>
              <th className={clsx(cell, "w-[65px]")}>库存费</th>
              <th className={clsx(cell, "w-[99px]")}>获利</th>
              <th className="pr-0.5 font-normal">注释</th>
            </tr>
          </thead>
          <tbody>
            <tr className="h-4 bg-[#c6c6c6] font-bold">
              <td colSpan={11}>
                <span className="flex items-center gap-[5px] whitespace-pre pl-1">
                  <svg viewBox="0 0 8 8" className="size-[7px]" fill="none" stroke="#888">
                    <circle cx="4" cy="4" r="3" />
                    <path d="M2.500 5.500l3-3" />
                  </svg>
                  余额: 10 286.84 USD{"  "}净值: 10 286.84{"  "}可用预付款: 10 286.84
                </span>
              </td>
              <td className="pr-0.5 text-right">0.00</td>
              <td />
            </tr>
          </tbody>
        </table>
        <a href="#" className="mx-auto mt-2 flex w-fit items-center gap-1 pr-1.5 text-[#0b57e8]">
          <svg viewBox="0 0 37 32" className="h-8 w-[37px]" fill="#0657f0">
            <path d="M11 1h18c1.200 0 2 .5 2.500 1.500l5 13c.5 1.600-.3 3-1.700 3H18c-1.200 0-2-.5-2.500-1.500L9.300 3.500C8.800 2 9.500 1 11 1z" />
            <path d="M6.500 5 4.300 8l6.500 14c.5 1 1.200 1.500 2.400 1.500H31c1.500 0 2.600-1 3.200-2.300H15.500c-1 0-1.800-.5-2.200-1.500z" />
            <path d="M2.500 9.500.8 13l7.200 16.500c.5 1 1.200 1.500 2.400 1.500H25c1.500 0 3-1.500 3.800-3.500H12c-1 0-1.800-.5-2.200-1.500z" />
          </svg>
          <span className="flex flex-col items-center">
            <span className="text-[27px] font-bold leading-6">精品EA</span>
            <span className="text-[14px] font-bold leading-4">eaclubshare.com</span>
          </span>
        </a>
      </div>
    </section>
  );
}

export default function App() {
  return (
    <div className="flex h-screen overflow-hidden bg-[#f0f0f0] font-['Noto_Sans','Noto_Sans_CJK_SC',sans-serif] text-[10px] leading-[13px] text-[#1a1a1a]">
      <div className="flex min-w-0 flex-1 flex-col">
        <div className="flex h-3.5 shrink-0 items-center pl-0.5 text-[#999]">
          <ProfilesIcon className="size-3.5" />
          <nav className="ml-1.5 flex flex-1 gap-[13px]">
            {menus.map((m) => <button key={m}>{m}</button>)}
          </nav>
          <div className="flex h-3.5 w-[45px] items-center justify-around bg-[#e5e5e5]">
            <button aria-label="最小化"><svg viewBox="0 0 4 4" className="size-1"><path d="M0 3h4" stroke="#789" /></svg></button>
            <button aria-label="还原"><svg viewBox="0 0 4 4" className="size-1"><path d="M.5 1.500h2v2h-2zM1.500.5h2v2" stroke="#789" fill="none" /></svg></button>
            <button aria-label="关闭窗口"><svg viewBox="0 0 4 4" className="size-1"><path d="M0 0l4 4M4 0 0 4" stroke="#789" strokeWidth="1.300" /></svg></button>
          </div>
        </div>
        <Toolbar />
        <main className="flex min-h-0 flex-1">
          <aside className="flex w-[285px] shrink-0 flex-col gap-1 border-t border-[#ccc] pb-1.5 pl-[3px] pr-[3px]">
            <MarketWatch />
            <Navigator />
          </aside>
          <div className="relative flex min-w-0 flex-1 flex-col">
            <Chart />
            <ChartTabs />
            <ExpertDialog />
          </div>
        </main>
        <Terminal />
      </div>
      {/* desktop wallpaper behind the window */}
      <div className="w-[5px] shrink-0 border-l border-[#777] bg-linear-to-b from-[#9fc3cf] via-[#a9a2ae] via-50% to-[#3f6a6a]" />
    </div>
  );
}
